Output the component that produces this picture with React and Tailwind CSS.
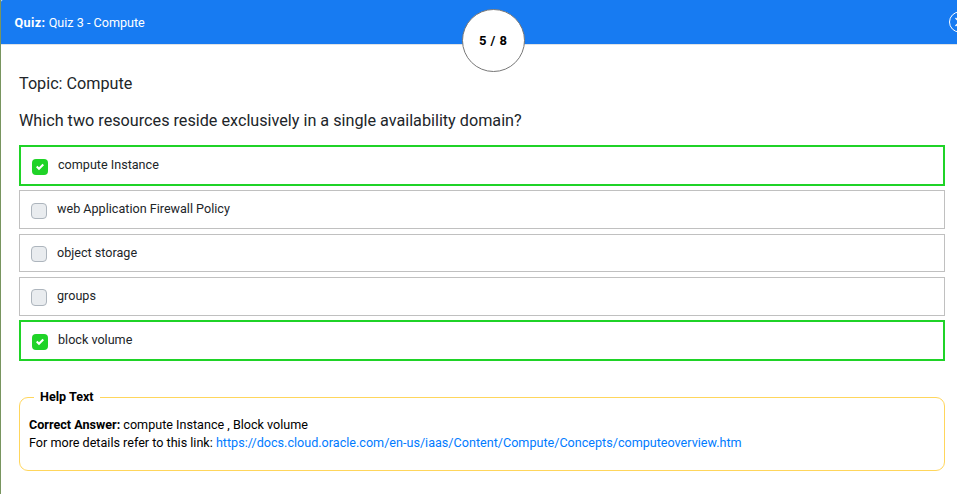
const options = [
  { text: "compute Instance", checked: true, row: "h-[41px] mb-1", box: "mt-1 h-4" },
  { text: "web Application Firewall Policy", checked: false, row: "h-[39px] mb-[5px]", box: "mt-1 h-4" },
  { text: "object storage", checked: false, row: "h-[38px] mb-[5px]", box: "mt-[3px] h-4" },
  { text: "groups", checked: false, row: "h-[39px] mb-1", box: "mt-[3px] h-[17px]" },
  { text: "block volume", checked: true, row: "h-[41px]", box: "mt-1 h-4" },
];

function Box({ checked, box }) {
  return checked ? (
    <span className={`flex w-4 shrink-0 items-center justify-center rounded-[4px] bg-[#1fd327] ${box}`}>
      <svg viewBox="0 0 8 8" className="h-2 w-2" fill="#fff">
        <path d="M6.564.75l-3.59 3.612-1.538-1.55L0 4.26l2.974 2.99L8 2.193z" />
      </svg>
    </span>
  ) : (
    <span className={`w-4 shrink-0 rounded-[4px] border border-[#adb5bd] bg-[#e9ecef] ${box}`} />
  );
}

export default function App() {
  return (
    <div className="h-[494px] overflow-hidden border-l border-[#78955f] bg-white font-['Roboto',sans-serif] text-[#212529]">
      <header className="relative h-[45px] rounded-tl-[2px] border-b border-[#dee2e6] bg-[#177bf2] pl-[13.5px] pt-[13px] text-[12.6px] leading-[20px] text-white">
        <b className="tracking-[0.4px]">Quiz:</b> Quiz 3 - Compute
        <div className="absolute left-[461px] top-[9px] flex h-[63px] w-[63px] items-center justify-center rounded-full border border-[#777] bg-white pr-px pt-px text-[13px] font-bold text-black [word-spacing:0.8px]">
          5 / 8
        </div>
        <svg className="absolute left-[947px] top-[11px] h-[22px] w-[22px]" viewBox="0 0 22 22" fill="none" stroke="#fff">
          <circle cx="11.5" cy="11" r="10" />
          <path d="M7.5 7l8 8M15.5 7l-8 8" strokeWidth="1.4" />
        </svg>
      </header>
      <main className="pl-[18px] pr-3">
        <p className="pt-[27px] text-[16.2px] leading-[24px]">Topic: Compute</p>
        <p className="mt-[13px] text-[16.2px] leading-[24px]">Which two resources reside exclusively in a single availability domain?</p>
        <div className="mt-[12px] flex flex-col">
          {options.map((o) => (
            <div
              key={o.text}
              className={`flex gap-[10px] pl-[11px] pt-2 text-[12.6px] leading-[20px] ${o.row} ${
                o.checked ? "border-2 border-[#1fd327]" : "border border-[#c0c0c0]"
              }`}
            >
              <Box checked={o.checked} box={o.box} />
              {o.text}
            </div>
          ))}
        </div>
        <fieldset className="mt-[27px] h-[83px] rounded-[9px] border border-[#ffd65c] pl-[9px] text-[12.6px] leading-[18px] text-black">
          <legend className="ml-[5px] px-[6px] font-bold">Help Text</legend>
          <p className="mt-[10px]"><b>Correct Answer:</b> compute Instance , Block volume</p>
          <p>For more details refer to this link: <span className="text-[#007bff]">https://docs.cloud.oracle.com/en-us/iaas/Content/Compute/Concepts/computeoverview.htm</span></p>
        </fieldset>
      </main>
    </div>
  );
}
